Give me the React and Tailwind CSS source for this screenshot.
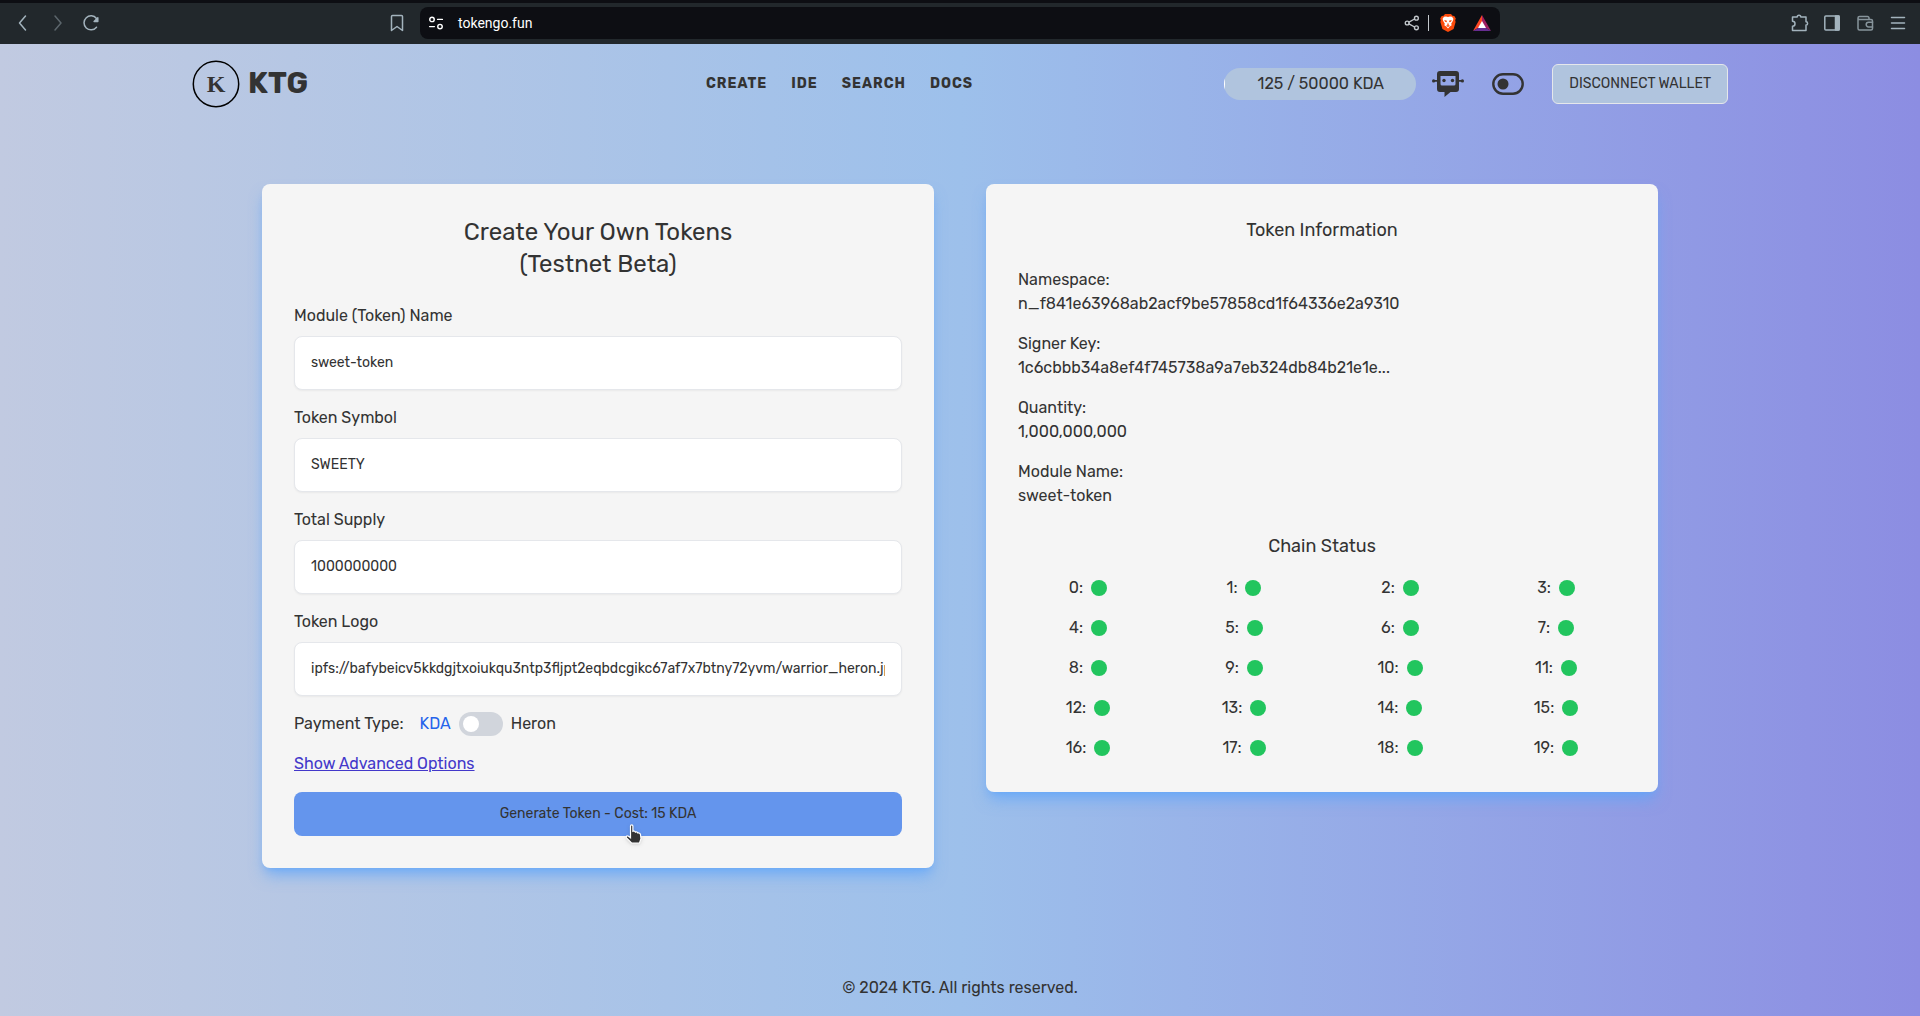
import React, { useState } from "react";

const NAV = ["CREATE", "IDE", "SEARCH", "DOCS"];

const FIELDS = [
  { id: "module", label: "Module (Token) Name", value: "sweet-token" },
  { id: "symbol", label: "Token Symbol", value: "SWEETY" },
  { id: "supply", label: "Total Supply", value: "1000000000" },
  {
    id: "logo",
    label: "Token Logo",
    value: "ipfs://bafybeicv5kkdgjtxoiukqu3ntp3fljpt2eqbdcgikc67af7x7btny72yvm/warrior_heron.jpg",
  },
];

const INFO = [
  ["Namespace:", "n_f841e63968ab2acf9be57858cd1f64336e2a9310"],
  ["Signer Key:", "1c6cbbb34a8ef4f745738a9a7eb324db84b21e1e..."],
  ["Quantity:", "1,000,000,000"],
  ["Module Name:", "sweet-token"],
];

const CHAINS = Array.from({ length: 20 }, (_, i) => i);

function Icon({ children, size = "size-5", stroke = 1.5 }) {
  return (
    <svg
      viewBox="0 0 20 20"
      className={size}
      fill="none"
      stroke="currentColor"
      strokeWidth={stroke}
      strokeLinecap="round"
      strokeLinejoin="round"
      aria-hidden="true"
    >
      {children}
    </svg>
  );
}

function BraveIcon() {
  return (
    <svg viewBox="0 0 16 18" className="h-[18px] w-4" aria-hidden="true">
      <path d="M5 0h6l1.500 1.700 1.800.2 1.500 2.600-.6 1.800.4 1.700-2 7L8 18l-5.600-3L.4 8l.4-1.700-.6-1.800 1.500-2.600 1.800-.2z" fill="#fb4a0b" />
      <path d="M8 3l2-.5 2 .3 1.400 2-.5 2-1.700 3 .5 1.500-2 1.200L8 14.500l-1.700-2-2-1.200.5-1.500-1.700-3-.5-2 1.400-2 2-.3z" fill="#fff" />
      <path d="M4.300 6l2.700.8-.4 1.400-1.600-.4zM11.700 6L9 6.800l.4 1.400 1.600-.4zM8 8.500l.8 2.200L8 11.500l-.8-.8zM6 11.800l2-.7 2 .7-2 1.200z" fill="#fb4a0b" />
    </svg>
  );
}

function BatIcon() {
  return (
    <svg viewBox="0 0 18 16" className="h-4 w-[18px]" aria-hidden="true">
      <path d="M9 0L0 16l9-5.500z" fill="#ff4724" />
      <path d="M9 0l9 16-9-5.500z" fill="#9e1f63" />
      <path d="M0 16h18l-9-5.500z" fill="#662d91" />
      <path d="M9 6l4 7H5z" fill="#fff" />
    </svg>
  );
}

function BrowserBar() {
  return (
    <div className="flex h-11 items-center border-t-[3px] border-[#0d0e13] bg-[#22282c] pb-px text-[#a3b3bd]">
      <div className="min-w-0 flex-1">
        <div className="flex items-center justify-between px-[13px]">
          <div className="flex items-center gap-3.5">
            <button aria-label="Back">
              <Icon><path d="M12.500 3L6.500 10l6 7" /></Icon>
            </button>
            <button aria-label="Forward" className="text-[#5c666c]">
              <Icon><path d="M8 3l6 7-6 7" /></Icon>
            </button>
            <button aria-label="Reload">
              <Icon>
                <path d="M15.500 14.200A7 7 0 1 1 15.500 5.500" />
                <path d="M16.800 4.800v3.700h-3.700z" fill="currentColor" />
              </Icon>
            </button>
          </div>
          <button aria-label="Bookmark">
            <Icon><path d="M4.500 3.500a1 1 0 0 1 1-1h9a1 1 0 0 1 1 1v14L10 13.500l-5.500 4z" /></Icon>
          </button>
        </div>
      </div>
      <div className="flex h-8 w-[56.25%] items-center rounded-lg bg-[#0d0e13] pr-[9px] pl-2 text-white">
        <Icon size="size-4" stroke={1.8}>
          <circle cx="5" cy="5.500" r="2.800" />
          <path d="M12 5.500h6M2 14.500h6" />
          <circle cx="15" cy="14.500" r="2.800" />
        </Icon>
        <span className="ml-3.5 flex-1 text-sm">tokengo.fun</span>
        <div className="flex items-center">
          <button aria-label="Share" className="text-[#c3c8cc]">
            <Icon size="size-4" stroke={1.7}>
              <circle cx="4" cy="10" r="2.400" />
              <circle cx="15.500" cy="4" r="2.400" />
              <circle cx="15.500" cy="16" r="2.400" />
              <path d="M6.200 9l7-4M6.200 11l7 4" />
            </Icon>
          </button>
          <span className="ml-2 h-4 w-px bg-[#c3c8cc]" />
          <button aria-label="Brave Shields" className="ml-[11px]"><BraveIcon /></button>
          <button aria-label="Brave Rewards" className="ml-[17px]"><BatIcon /></button>
        </div>
      </div>
      <div className="min-w-0 flex-1">
        <div className="flex items-center justify-end gap-[13px] px-3">
          <button aria-label="Extensions">
            <Icon>
              <path d="M3.500 4h4.700a1.800 1.800 0 0 1 3.600 0H17v4.800a1.600 1.600 0 0 1 0 3.200v5.500H3.500v-4.200a2.500 2.500 0 0 0 0-5z" />
            </Icon>
          </button>
          <button aria-label="Sidebar">
            <Icon>
              <rect x="2.800" y="3" width="14.400" height="14" rx="1" />
              <path d="M13.500 3H17v14h-3.500z" fill="currentColor" />
            </Icon>
          </button>
          <button aria-label="Wallet" className="text-[#87949b]">
            <Icon>
              <path d="M14 6.500V5a1.500 1.500 0 0 0-1.500-1.500H4.500a1.500 1.500 0 0 0 0 3H16a1.500 1.500 0 0 1 1.500 1.500v7.500A1.500 1.500 0 0 1 16 17H4.500A1.500 1.500 0 0 1 3 15.500V5" />
              <path d="M17.500 9.300h-4a2.300 2.300 0 0 0 0 4.600h4" />
            </Icon>
          </button>
          <button aria-label="Menu">
            <Icon><path d="M3.500 4.500h13M3.500 10h13M3.500 15.500h13" /></Icon>
          </button>
        </div>
      </div>
    </div>
  );
}

function Logo() {
  return (
    <svg viewBox="0 0 48 48" className="size-12" aria-hidden="true">
      <circle cx="24" cy="24" r="22.700" fill="none" stroke="#000" strokeWidth="1.500" />
      <text x="24" y="32" textAnchor="middle" fill="currentColor" className="font-['Liberation_Serif',serif] text-2xl font-bold">K</text>
    </svg>
  );
}

function RobotIcon() {
  return (
    <svg viewBox="0 0 32 32" className="size-8" fill="currentColor" aria-hidden="true">
      <path
        fillRule="evenodd"
        d="M8 3h16a3 3 0 0 1 3 3v15a3 3 0 0 1-3 3h-5.500l-6 5v-5H8a3 3 0 0 1-3-3V6a3 3 0 0 1 3-3zm.5 5v8a1.500 1.500 0 0 0 1.500 1.500h12a1.500 1.500 0 0 0 1.500-1.500V8z"
      />
      <circle cx="12" cy="12.500" r="1.700" />
      <circle cx="20.500" cy="12.500" r="1.700" />
      <path d="M1.500 12h4v1.800h-4zM26.500 12h4v1.800h-4z" />
      <circle cx="1.600" cy="12.900" r="1.600" />
      <circle cx="30.400" cy="12.900" r="1.600" />
    </svg>
  );
}

function ThemeToggleIcon() {
  return (
    <svg viewBox="0 0 32 32" className="size-8" aria-hidden="true">
      <rect x="1.300" y="6.300" width="29.400" height="19.400" rx="9.700" fill="none" stroke="currentColor" strokeWidth="2.400" />
      <circle cx="11" cy="16" r="5.500" fill="currentColor" />
    </svg>
  );
}

function Header() {
  return (
    <header className="flex h-20 w-4/5 items-center self-center">
      <a href="#home" className="flex w-1/3 items-center gap-2">
        <Logo />
        <span className="pb-0.5 text-3xl font-bold">KTG</span>
      </a>
      <nav className="flex flex-1 gap-6 px-0.5 text-sm font-bold tracking-[1px]">
        {NAV.map((item) => (
          <a key={item} href={`#${item.toLowerCase()}`}>{item}</a>
        ))}
      </nav>
      <div className="flex items-center gap-7">
        <div className="flex items-center gap-4">
          <div className="flex h-8 w-48 overflow-hidden rounded-full bg-[#b0c4de]">
            <span className="w-px bg-white" />
            <span className="flex-1 text-center leading-8">125 / 50000 KDA</span>
          </div>
          <button aria-label="Chat bot"><RobotIcon /></button>
        </div>
        <button aria-label="Toggle theme"><ThemeToggleIcon /></button>
        <button className="h-10 rounded-md border border-gray-200 bg-[#b0c4de] px-4 text-sm">
          DISCONNECT WALLET
        </button>
      </div>
    </header>
  );
}

function PointerCursor() {
  return (
    <svg viewBox="0 0 18 21" className="absolute top-8 left-1/2 ml-[27px] h-[21px] w-[18px] drop-shadow" aria-hidden="true">
      <path
        d="M5.500 2c0-1.600 2.400-1.600 2.400 0v5.300c1.300-.5 2.300 0 2.500.8 1.100-.4 2.100 0 2.400.9 1.200-.3 2.600.3 2.700 1.600l.5 4.200-1.500 4.200H6.500L1.500 13.800c-.9-1.400.8-2.600 2-1.600l2 1.600z"
        fill="#333"
        stroke="#fff"
        strokeWidth="1.200"
      />
    </svg>
  );
}

function TokenForm() {
  const [values, setValues] = useState(() => Object.fromEntries(FIELDS.map((f) => [f.id, f.value])));
  const [heron, setHeron] = useState(false);
  return (
    <form className="w-full max-w-2xl rounded-lg bg-[#f5f5f5] p-8 shadow-lg shadow-[#60a5fa]/75" onSubmit={(e) => e.preventDefault()}>
      <h1 className="mb-6 text-center text-2xl">
        Create Your Own Tokens
        <br />
        (Testnet Beta)
      </h1>
      <div className="flex flex-col gap-4">
        {FIELDS.map((f) => (
          <div key={f.id} className="flex flex-col gap-2">
            <label htmlFor={f.id}>{f.label}</label>
            <input
              id={f.id}
              type="text"
              value={values[f.id]}
              onChange={(e) => setValues({ ...values, [f.id]: e.target.value })}
              className="w-full rounded-lg border border-gray-200 bg-white p-4 text-sm shadow-xs"
            />
          </div>
        ))}
        <div className="flex items-center">
          <span className="mr-4">Payment Type:</span>
          <label className="flex items-center gap-2">
            <span className="text-[#2563eb]">KDA</span>
            <input
              type="checkbox"
              role="switch"
              aria-label="Pay with Heron"
              checked={heron}
              onChange={(e) => setHeron(e.target.checked)}
              className="flex h-6 w-11 appearance-none items-center rounded-full bg-gray-300 px-1 before:size-4 before:rounded-full before:bg-white checked:justify-end"
            />
            <span>Heron</span>
          </label>
        </div>
        <a href="#advanced" className="self-start text-[#4338ca] underline">Show Advanced Options</a>
        <button type="submit" className="relative h-11 rounded-lg bg-[#6495ed] text-sm">
          Generate Token - Cost: 15 KDA
          <PointerCursor />
        </button>
      </div>
    </form>
  );
}

function TokenInfo() {
  return (
    <section className="w-full max-w-2xl rounded-lg bg-[#f5f5f5] p-8 shadow-lg shadow-[#60a5fa]/75">
      <h2 className="mb-6 text-center text-lg leading-7">Token Information</h2>
      <dl className="flex flex-col gap-4">
        {INFO.map(([term, value]) => (
          <div key={term}>
            <dt>{term}</dt>
            <dd>{value}</dd>
          </div>
        ))}
      </dl>
      <h2 className="mt-6 mb-4 text-center text-lg leading-7">Chain Status</h2>
      <ul className="grid grid-cols-4 gap-4">
        {CHAINS.map((n) => (
          <li key={n} className="flex items-center justify-center gap-2">
            <span>{n}:</span>
            <span className="size-4 rounded-full bg-[#22c55e]" />
          </li>
        ))}
      </ul>
    </section>
  );
}

export default function App() {
  return (
    <div className="flex min-h-screen flex-col font-[Rubik,Roboto,sans-serif] text-[#333]">
      <div className="font-[Roboto,sans-serif]"><BrowserBar /></div>
      <div className="flex flex-1 flex-col bg-[linear-gradient(to_right,#c1cae1,#9dc0eb_50%,#8c8de2)]">
        <Header />
        <main className="flex flex-1 items-start justify-center gap-[52px] px-8 pt-[60px]">
          <TokenForm />
          <TokenInfo />
        </main>
        <footer className="p-4 text-center">© 2024 KTG. All rights reserved.</footer>
      </div>
    </div>
  );
}
